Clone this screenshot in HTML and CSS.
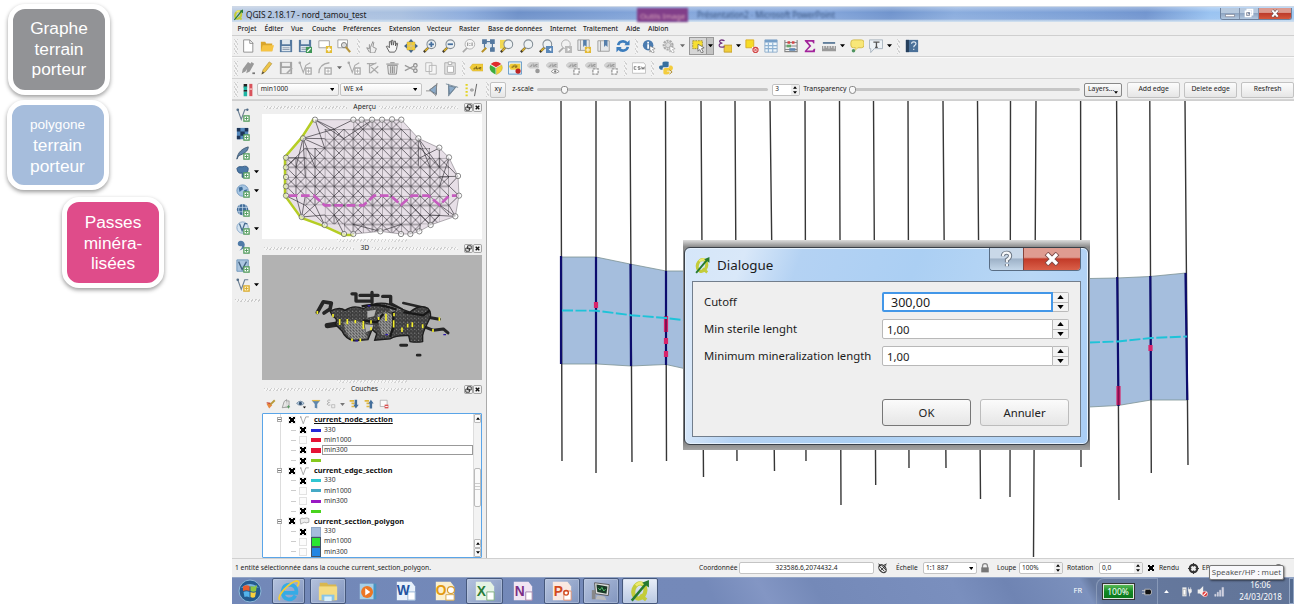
FILE: index.html
```html
<!DOCTYPE html>
<html lang="fr">
<head>
<meta charset="utf-8">
<title>QGIS 2.18.17 - nord_tamou_test</title>
<link rel="stylesheet" href="styles.css">
</head>
<body>
<svg class="sprite" aria-hidden="true">
  <symbol id="new" viewBox="0 0 16 16"><path d="M3 1h7l3.500 3.500V15H3z" fill="#fff" stroke="#888"/><path d="M10 1v4h4" fill="none" stroke="#888"/></symbol>
  <symbol id="open" viewBox="0 0 16 16"><path d="M1 3h5l1 2h7v9H1z" fill="#d9a62c"/><path d="M3 7h13l-2 7H1z" fill="#f6c443"/></symbol>
  <symbol id="save" viewBox="0 0 16 16"><path d="M1 1h14v14H1z" fill="#55799f"/><path d="M3.500 1h9v5h-9zM3 8h10v6H3z" fill="#dfe7ee"/><path d="M4 10h8M4 12h8" stroke="#8898aa"/></symbol>
  <symbol id="saveas" viewBox="0 0 16 16"><use href="#save"/><path d="M9 9h7v7H9z" fill="#3f9656"/><path d="M10.500 14.500l4-4" stroke="#fff" stroke-width="1.500"/></symbol>
  <symbol id="newlay" viewBox="0 0 16 16"><path d="M1 2h12v8H1z" fill="#fff" stroke="#999"/><path d="M9 8h7v8H9z" fill="#e3bd37"/><path d="M12.500 9.500v5M10 12h5" stroke="#fff" stroke-width="1.500"/></symbol>
  <symbol id="laymgr" viewBox="0 0 16 16"><path d="M1 1h11v9H1z" fill="#fff" stroke="#999"/><circle cx="8" cy="7" r="3" fill="#ddd" stroke="#777"/><path d="M10 9l5 6" stroke="#b7963f" stroke-width="2.500"/></symbol>
  <symbol id="touch" viewBox="0 0 16 16"><path d="M5 15l-3-5 3 1V6M6 10l3-7 1 1-1 5 4 2-2 5H6z" fill="#eee" stroke="#888"/></symbol>
  <symbol id="hand" viewBox="0 0 16 16"><path d="M5 15L1.500 8.500 3 8l2 2V3l1.500-.5L7.500 7V1.500H9L9.500 7l1-4.500H12L12 8l1.500-3.500 1 .5-1.500 7-2 3z" fill="#f5f5f5" stroke="#555"/></symbol>
  <symbol id="panmap" viewBox="0 0 16 16"><path d="M8 0l3 3.500H5zM8 16l3-3.500H5zM0 8l3.500-3v6zM16 8l-3.500-3v6z" fill="#42648e"/><path d="M3.500 3.500h4v4h-4zM8.500 8.500h4v4h-4zM8.500 3.500h4v4h-4zM3.500 8.500h4v4h-4z" fill="#f2cd38" stroke="#c3a32b" stroke-width=".5"/></symbol>
  <symbol id="mag" viewBox="0 0 16 16"><path d="M6 10l-5 5" stroke="#3d3727" stroke-width="2.600"/><path d="M6 10l-3.500 3.500" stroke="#dbb22c" stroke-width="2"/><circle cx="9.500" cy="6" r="5" fill="#eef2f4" stroke="#848e96" stroke-width="1.200"/></symbol>
  <symbol id="zin" viewBox="0 0 16 16"><use href="#mag"/><path d="M9.500 3v6M6.500 6h6" stroke="#456f9e" stroke-width="2"/></symbol>
  <symbol id="zout" viewBox="0 0 16 16"><use href="#mag"/><path d="M6.500 6h6" stroke="#456f9e" stroke-width="2"/></symbol>
  <symbol id="z11" viewBox="0 0 16 16"><path d="M6 10l-5 5" stroke="#aaa" stroke-width="2"/><circle cx="9" cy="6" r="5.500" fill="#f6f6f6" stroke="#aaa"/><path d="M6.500 4v4M11.500 4v4M9 4.500v1M9 7v1" stroke="#777"/></symbol>
  <symbol id="zfull" viewBox="0 0 16 16"><path d="M2 1h4v4H2zM11 1h4v4h-4zM11 10h4v4h-4zM5 3h6M13 5v6M4 5v5" fill="#55799f" stroke="#55799f" stroke-width="1.400"/><path d="M6 10l-5 5" stroke="#b59028" stroke-width="2.400"/><circle cx="8.500" cy="7.500" r="3" fill="#dce8f1"/></symbol>
  <symbol id="zsel" viewBox="0 0 16 16"><path d="M0 1h8v10H0z" fill="#f2d952"/><use href="#mag"/></symbol>
  <symbol id="zlast" viewBox="0 0 16 16"><use href="#mag"/><path d="M8 8h8v8H8z" fill="#5c89b9"/><path d="M14 10l-3 2 3 2z" fill="#fff"/></symbol>
  <symbol id="znext" viewBox="0 0 16 16"><circle cx="9" cy="6" r="5" fill="#f2f2f2" stroke="#aaa"/><path d="M6 10l-5 5" stroke="#aaa" stroke-width="2"/><path d="M8 8h8v8H8z" fill="#bbb"/><path d="M11 10l3 2-3 2z" fill="#fff"/></symbol>
  <symbol id="bmnew" viewBox="0 0 16 16"><path d="M1 1h13v12H1z" fill="#e6e8ea" stroke="#999"/><path d="M4 1v12" stroke="#999"/><path d="M7 1h4v8L9 7 7 9z" fill="#557eaa"/><path d="M9 9h7v7H9z" fill="#e3b934"/><path d="M12.500 10v5M10 12.500h5" stroke="#fff"/></symbol>
  <symbol id="bm" viewBox="0 0 16 16"><path d="M1 2h13v12H1z" fill="#e6e8ea" stroke="#999"/><path d="M4 2v12" stroke="#999"/><path d="M8 1h4v8l-2-2-2 2z" fill="#557eaa"/></symbol>
  <symbol id="refresh" viewBox="0 0 16 16"><path d="M2.500 7a5.500 5 0 0 1 10-2M13.500 9a5.500 5 0 0 1-10 2" fill="none" stroke="#3c7dbd" stroke-width="3"/><path d="M15.500 1v6h-6zM.5 15V9h6z" fill="#3c7dbd"/></symbol>
  <symbol id="ident" viewBox="0 0 16 16"><circle cx="7" cy="7" r="6" fill="#4b7cb0"/><path d="M7 6v5M7 3v2" stroke="#fff" stroke-width="2"/><path d="M9 8l6 3-3 1 2 3-2 1-2-3-1 2z" fill="#fff" stroke="#777" stroke-width=".7"/></symbol>
  <symbol id="gear" viewBox="0 0 16 16"><circle cx="7" cy="7" r="5" fill="none" stroke="#aaa" stroke-width="2.500" stroke-dasharray="2.500 1"/><circle cx="7" cy="7" r="3" fill="#ddd" stroke="#aaa"/><path d="M9 8l6 3-3 1 2 3-2 1-2-3-1 2z" fill="#fff" stroke="#999" stroke-width=".7"/></symbol>
  <symbol id="select" viewBox="0 0 16 16"><path d="M2 2h11v9H2z" fill="#f7df33" stroke="#9a8b35" stroke-dasharray="2 1"/><path d="M8 6l7 4-3 1 2 4-2 1-2-4-2 2z" fill="#fff" stroke="#555" stroke-width=".8"/></symbol>
  <symbol id="eps" viewBox="0 0 16 16"><path d="M7 7h9v8H7z" fill="#f0cd3c" stroke="#c19b2c"/><path d="M7.500 2C4.500.5 1.500 1 2 3.200c.5 1.300 1.800 1.500 3 1.500C2.500 5 .8 6 1.500 8c1 2 4.500 1.500 6 .5" fill="none" stroke="#71357e" stroke-width="1.500"/></symbol>
  <symbol id="desel" viewBox="0 0 16 16"><path d="M1 1h9v9H1z" fill="#f6dc28" stroke="#d8ac23"/><path d="M8 9h8v7H8z" fill="#fff"/><circle cx="12" cy="12.500" r="3" fill="#f8dddd" stroke="#cf4444" stroke-width="1.300"/><path d="M10 10.500l4 4m0-4l-4 4" stroke="#cf4444"/></symbol>
  <symbol id="table" viewBox="0 0 16 16"><path d="M1 1h14v14H1z" fill="#eef6fb" stroke="#8aa9c7"/><path d="M1 1h14v3H1z" fill="#769fc8"/><path d="M1 7.500h14M1 11h14M5 4v11M10 4v11" stroke="#8db1d2" stroke-width="1.300"/></symbol>
  <symbol id="abacus" viewBox="0 0 16 16"><path d="M1 1v14M15 1v14M1 14.500h14M1 4h14M1 8h14M1 12h14" stroke="#888" stroke-width="1.300"/><path d="M4 4h3M9 4h3" stroke="#d34545" stroke-width="3"/><path d="M3 8h5" stroke="#65a568" stroke-width="3"/><path d="M6 12h7" stroke="#5f87b2" stroke-width="3"/></symbol>
  <symbol id="sigma" viewBox="0 0 16 16"><path d="M2 1h11v4h-1L10.500 3H5.500l4 5-5 5h6.500l1.500-2H14l-.5 4H2v-1.200L7 8 2 2.200z" fill="#a2249b"/></symbol>
  <symbol id="ruler" viewBox="0 0 16 16"><path d="M1 4.500h14" stroke="#597896" stroke-width="2"/><path d="M0 8h16v6H0z" fill="#9a9a9a"/><path d="M2 8v3M5 8v2M8 8v3M11 8v2M14 8v3" stroke="#eee"/></symbol>
  <symbol id="tip" viewBox="0 0 16 16"><rect x="1" y="1" width="15" height="9" rx="3" fill="#f8e778" stroke="#d1b844"/><path d="M6 9.500V13l4-4" fill="#f8e778" stroke="#d1b844" stroke-width=".5"/><circle cx="4" cy="13.500" r="2" fill="#4e9360"/></symbol>
  <symbol id="note" viewBox="0 0 16 16"><path d="M.5 1h15v10H6l-4 4.500V11H.5z" fill="#edf2f6" stroke="#a2afba"/><path d="M5 3.500h7M8.500 3v6.500M7 9.500h3" stroke="#555" stroke-width="1.500"/></symbol>
  <symbol id="help" viewBox="0 0 16 16"><path d="M1 1h14v14H1z" fill="#4b7199"/><path d="M1 1h3.500v14H1z" fill="#263f5c"/><path d="M7.500 5.500c0-3 5-3 5 0 0 2-2.500 1.500-2.500 4M10 11v1.500" fill="none" stroke="#dfe9f3" stroke-width="1.300"/></symbol>
  <symbol id="pencils" viewBox="0 0 16 16"><path d="M1 14l1-5 6-8 3 2-6 9zM6 14l1-5 5-8 3 2-5 9z" fill="#999"/><path d="M13 14h3" stroke="#777" stroke-width="2"/></symbol>
  <symbol id="pencil" viewBox="0 0 16 16"><path d="M2 15l1.500-5 7-9 3 2-7 9z" fill="#eec548" stroke="#a98a35" stroke-width=".7"/><path d="M2 15l1-3 2 1.500z" fill="#444"/></symbol>
  <symbol id="saveg" viewBox="0 0 16 16"><path d="M1 1h14v14H1z" fill="#a5a5a5"/><path d="M3.500 2h9v4h-9zM3 8h10v6H3z" fill="#eee"/><path d="M9 14l6-6" stroke="#aaa" stroke-width="2"/></symbol>
  <symbol id="vadd" viewBox="0 0 16 16"><path d="M2 2l4 11 3-8 5-3" fill="none" stroke="#aaa" stroke-width="1.200"/><circle cx="2" cy="2" r="1.500" fill="#aaa"/><path d="M9 8h6v7H9z" fill="#fff" stroke="#aaa" stroke-width="1.500"/><path d="M12 9.500v4M10 11.500h4" stroke="#aaa"/></symbol>
  <symbol id="arcadd" viewBox="0 0 16 16"><path d="M1 14C1 7 5 3 13 2" fill="none" stroke="#aaa" stroke-width="1.500"/><path d="M8 8h7v7H8z" fill="#fff" stroke="#aaa" stroke-width="1.500"/><path d="M11.500 9.500v4M9.500 11.500h4" stroke="#aaa"/></symbol>
  <symbol id="node" viewBox="0 0 16 16"><path d="M1 3h10M4 3v11M4 6l8-4M6 7l8 7M5 14l9-8" fill="none" stroke="#aaa" stroke-width="1.400"/></symbol>
  <symbol id="trash" viewBox="0 0 16 16"><path d="M3 5h11l-1 10H4z" fill="#e4e4e4" stroke="#888"/><path d="M1.500 3.500h14M6 2h5M6.500 6v8M8.500 6v8M10.500 6v8" stroke="#888" stroke-width="1.100"/></symbol>
  <symbol id="cut" viewBox="0 0 16 16"><path d="M1 5l10 5M1 11l10-5" stroke="#999" stroke-width="1.500"/><circle cx="13" cy="5" r="2" fill="none" stroke="#888" stroke-width="1.300"/><circle cx="13" cy="11" r="2" fill="none" stroke="#888" stroke-width="1.300"/></symbol>
  <symbol id="copy" viewBox="0 0 16 16"><path d="M2 2h7v10H2zM6 5h8v10H6z" fill="#f6f6f6" stroke="#b3b3b3"/></symbol>
  <symbol id="paste" viewBox="0 0 16 16"><path d="M2 2h12v13H2z" fill="#e4e4e4" stroke="#aaa"/><path d="M6 1h4v3H6zM5 6h7v7H5z" fill="#fff" stroke="#aaa"/></symbol>
  <symbol id="abc" viewBox="0 0 16 16"><path d="M1 7.500l3-4h12v8H4z" fill="#f0cb38" stroke="#d1aa2d" stroke-width=".5"/><path d="M5 9h2V7M8.500 6v3h2V7.500M14 7.500h-2V9h2" fill="none" stroke="#6b5713"/></symbol>
  <symbol id="pie" viewBox="0 0 16 16"><path d="M8 7L2 3.500Q8-2 14 3.500z" fill="#e02b2b"/><path d="M8.500 8l6-3.500q3 7-6 11z" fill="#f2d332" stroke="#bba02b" stroke-width=".5"/><path d="M7.500 8L1.500 4.500q-3 7 6 11z" fill="#3dad3c"/></symbol>
  <symbol id="abcpin" viewBox="0 0 16 16"><path d="M.5 1h15v14H.5z" fill="#e3f0fa" stroke="#5a92c4"/><path d="M1 6l2-3h11v7H3z" fill="#f0cb38"/><path d="M4 7h2V5M8 4v3h2V5" fill="none" stroke="#6b5713"/><circle cx="11.500" cy="11.500" r="3" fill="#bd2424"/></symbol>
  <symbol id="abcg" viewBox="0 0 16 16"><path d="M0 5l3-3h10v6H3z" fill="#d4d4d4" stroke="#c5c5c5"/><path d="M3 6h2V4M7 3v3h2V4M12 4h-2v2h2" fill="none" stroke="#8f8f8f"/></symbol>
  <symbol id="abcg1" viewBox="0 0 16 16"><use href="#abcg"/><circle cx="12" cy="11.500" r="2.600" fill="#999"/></symbol>
  <symbol id="abcg2" viewBox="0 0 16 16"><use href="#abcg"/><path d="M6 12q4-5 9 0-5 4-9 0" fill="#fff" stroke="#888"/><circle cx="10.500" cy="12" r="1.300" fill="#777"/></symbol>
  <symbol id="abcg3" viewBox="0 0 16 16"><use href="#abcg"/><path d="M9 9h6v6H9z" fill="#fff" stroke="#999" stroke-width="1.500" stroke-dasharray="3 1"/></symbol>
  <symbol id="csw" viewBox="0 0 16 16"><path d="M.5 2h13l2 2.500V14H.5z" fill="#fff" stroke="#bbb"/><path d="M5 6.500H2.500v3H5M9.500 6.500H7V8h2.300v1.500H6.800M11 6.500l.6 3 1-2.200 1 2.200.6-3" fill="none" stroke="#666" stroke-width=".9"/></symbol>
  <symbol id="py" viewBox="0 0 16 16"><path d="M4 5V2q0-1.500 4-1.500T11 2v4q0 1-2 1H5Q4 7 4 10H2Q0 9 0 7t2-2h5" fill="#356f9f"/><path d="M12 5h2q2 1 2 3t-2 3H9v1h3v2q-1 1.500-4 1.500T5 14v-4q0-2 2-2h3q2 0 2-3" fill="#f3cc3e"/><path d="M12 10l3 2.500-3 2.500" fill="none" stroke="#a88522"/></symbol>
  <symbol id="bars" viewBox="0 0 16 16"><path d="M3 1h4v4H3zM3 8h4v2H3z" fill="#222"/><path d="M3 4h4v4H3zM3 10h4v5H3z" fill="#1eb5a3"/><path d="M9.500 1h3.500v14H9.500z" fill="#d9535c"/><path d="M9.500 6H13v2H9.500z" fill="#f0b0b0"/></symbol>
  <symbol id="tri1" viewBox="0 0 16 16"><path d="M4 8l8-6v11z" fill="#8cabc9" stroke="#5a7187"/><path d="M0 9h5l6 5M12.500 0L11 15M4 8l9-7" fill="none" stroke="#888"/></symbol>
  <symbol id="tri2" viewBox="0 0 16 16"><path d="M4 3l8 2-7 8z" fill="#8cabc9" stroke="#5a7187"/><path d="M4 1v14M4 15L13 4M1 1l14 4" stroke="#778a9a"/></symbol>
  <symbol id="sec" viewBox="0 0 16 16"><path d="M3 1v14" stroke="#e3d420" stroke-width="2.500" stroke-dasharray="2 2"/><path d="M7 8h4M14.500 1l-2.500 14" stroke="#555"/><circle cx="9" cy="8" r="2" fill="#aaa"/></symbol>
  <symbol id="plus" viewBox="0 0 16 16"><path d="M9 9h6v6H9z" fill="#fff" stroke="#4c9857" stroke-width="1.400"/><path d="M12 10v4M10 12h4" stroke="#4c9857"/></symbol>
  <symbol id="lv" viewBox="0 0 16 16"><path d="M2 2l4 11 4-11h4" fill="none" stroke="#6b7f93" stroke-width="1.300"/><circle cx="2" cy="2" r="1.500" fill="#4f6a85"/><circle cx="13" cy="2" r="1.300" fill="#4f6a85"/><use href="#plus"/></symbol>
  <symbol id="lraster" viewBox="0 0 16 16"><path d="M1 1h13v13H1z" fill="#5589bd"/><path d="M1 1h4v4H1zM10 1h4v4h-4zM5 5h5v5H5zM1 10h4v4H1z" fill="#1d3557"/><use href="#plus"/></symbol>
  <symbol id="lfeather" viewBox="0 0 16 16"><path d="M1 15C2 7 7 3 14 1c0 5-5 8-11 10z" fill="#5f84a8" stroke="#38536e"/><use href="#plus"/></symbol>
  <symbol id="lpg" viewBox="0 0 16 16"><path d="M1 4q1-3 6-2 6-2 7 2c0 4-2 6-4 6l-1 4H7V9Q2 11 1 4" fill="#4b78a6" stroke="#30567e"/><use href="#plus"/></symbol>
  <symbol id="lglobe" viewBox="0 0 16 16"><circle cx="7.500" cy="7.500" r="6.500" fill="#a6c5e2" stroke="#6a94bd"/><path d="M3 4l4-1 1 3-4 3zM9 7l4-1-2 5z" fill="#3f6e9c"/><use href="#plus"/></symbol>
  <symbol id="lgrid" viewBox="0 0 16 16"><circle cx="7.500" cy="7.500" r="6.500" fill="#3f6b98"/><path d="M1 5h13M1 10h13M7.500 1v13M4 2q-2 5 0 11M11 2q2 5 0 11" fill="none" stroke="#cfe0f0" stroke-width=".8"/><use href="#plus"/></symbol>
  <symbol id="lwfs" viewBox="0 0 16 16"><circle cx="7.500" cy="7.500" r="6.500" fill="#d4e3f0" stroke="#81a4c7"/><path d="M4 3l3 8 3-8h3" fill="none" stroke="#456a8e" stroke-width="1.500"/><use href="#plus"/></symbol>
  <symbol id="lcomma" viewBox="0 0 16 16"><path d="M4 1q5-1 6 4 0 5-6 7 3-3 3-5-5 1-5-3 0-2 2-3" fill="#4f7ba8"/><use href="#plus"/></symbol>
  <symbol id="lvirt" viewBox="0 0 16 16"><path d="M1 1h13v13H1z" fill="#aac5df" stroke="#6992ba"/><path d="M3 3l4 9 5-9" fill="none" stroke="#40607f" stroke-width="1.500"/><use href="#plus"/></symbol>
  <symbol id="lvy" viewBox="0 0 16 16"><path d="M2 2l4 11 4-11h4" fill="none" stroke="#6b7f93" stroke-width="1.300"/><circle cx="2" cy="2" r="1.500" fill="#4f6a85"/><path d="M9 9h6v6H9z" fill="#fff4c0" stroke="#d9a92c" stroke-width="1.500"/><path d="M12 10v4M10 12h4" stroke="#d9a92c"/></symbol>
  <symbol id="brush" viewBox="0 0 16 16"><path d="M1 8l4-2 5 4-5 5z" fill="#e7873d"/><path d="M7 9l7-7" stroke="#b89a3b" stroke-width="3"/><path d="M1 6l6 1" stroke="#c7412e" stroke-width="2"/></symbol>
  <symbol id="grp" viewBox="0 0 16 16"><path d="M2 14L5 4l4-3v12z" fill="#e6e6e6" stroke="#777"/><path d="M9 3h4v10H7" fill="#ddd" stroke="#888"/><path d="M12 10v5M9.500 12.500h5" stroke="#559960" stroke-width="1.500"/></symbol>
  <symbol id="eye" viewBox="0 0 16 16"><path d="M1 7q6-7 12 0-6 6-12 0" fill="#bdd2e5" stroke="#46637f"/><circle cx="7" cy="7" r="2.500" fill="#2f4c6d"/><path d="M11 12h5l-2.500 3z" fill="#111"/></symbol>
  <symbol id="funnel" viewBox="0 0 16 16"><path d="M1 2h14l-5 6v7l-4-1V8z" fill="#5f87ae"/><path d="M2 2.500h12" stroke="#e5b945" stroke-width="2"/></symbol>
  <symbol id="epsg" viewBox="0 0 16 16"><path d="M7 2C4 1 2 2 2.500 4q1 1.500 3 1.500Q2 6 2 8.500 3 11 7 9.500" fill="none" stroke="#aaa" stroke-width="1.500"/><path d="M9 9h5v5H9z" fill="#eee" stroke="#aaa"/></symbol>
  <symbol id="expand" viewBox="0 0 16 16"><path d="M1 3h7M4 7h5M4 12h5" stroke="#e0b73e" stroke-width="2.500"/><path d="M9 1h4v8h2.500L11 15 7 9h2z" fill="#446f9c"/></symbol>
  <symbol id="collapse" viewBox="0 0 16 16"><path d="M1 3h7M4 7h5M4 12h5" stroke="#e0b73e" stroke-width="2.500"/><path d="M9 15h4V7h2.500L11 1 7 7h2z" fill="#446f9c"/></symbol>
  <symbol id="rem" viewBox="0 0 16 16"><path d="M2 2h11v10H2z" fill="#fafafa" stroke="#999"/><path d="M9 9h6v6H9z" fill="#da5353"/><path d="M10 12h4" stroke="#fff" stroke-width="1.500"/></symbol>
  <symbol id="qgis" viewBox="0 0 16 16"><ellipse cx="7.500" cy="8" rx="4.300" ry="5.600" transform="rotate(18 7.500 8)" fill="none" stroke="#c3cc3a" stroke-width="3"/><path d="M5 4Q8 1 11 3" fill="none" stroke="#ece96e" stroke-width="2"/><path d="M8 11l4.500 3.500" stroke="#c3cc3a" stroke-width="2.600"/><path d="M2 15L12.500 2.500" stroke="#277a30" stroke-width="1.800"/><path d="M14.500 0v5.500L9.500 2z" fill="#277a30"/></symbol>
  <symbol id="line" viewBox="0 0 16 16"><path d="M2 3l4 11 4-11h5" fill="none" stroke="#999" stroke-width="1.300"/><circle cx="2" cy="3" r="1" fill="#777"/></symbol>
  <symbol id="poly" viewBox="0 0 16 16"><path d="M1 5q3-3 6-1 5-2 8 0v6q-5 2-7 0-3 1-6 3z" fill="#eee" stroke="#888"/></symbol>
  <symbol id="arr" viewBox="0 0 8 5"><path d="M0 0h8L4 5z"/></symbol>
  <symbol id="float" viewBox="0 0 10 10"><rect x=".5" y=".5" width="9" height="9" rx="1.500" fill="#f2f2f2" stroke="#999"/><path d="M4 2h4v3.500H4zM2 4.500h4V8H2z" fill="#fff" stroke="#222"/></symbol>
  <symbol id="close" viewBox="0 0 10 10"><rect x=".5" y=".5" width="9" height="9" rx="1.500" fill="#f2f2f2" stroke="#999"/><path d="M3 3l4 4m0-4L3 7" stroke="#111" stroke-width="1.500"/></symbol>
  <symbol id="lock" viewBox="0 0 16 16"><path d="M4 8V5q0-4 4-4t4 4v3" fill="none" stroke="#888" stroke-width="2"/><path d="M2 7h12v8H2z" fill="#777"/></symbol>
  <symbol id="mouse" viewBox="0 0 16 16"><ellipse cx="8" cy="9" rx="4.500" ry="6.500" transform="rotate(-40 8 9)" fill="#eee" stroke="#333" stroke-width="1.500"/><path d="M3 5l8 8M6 3l7 8M2 2l4 3M5 12L13 4M10 4l4-2" stroke="#222" stroke-width="1.300"/></symbol>
  <symbol id="crs" viewBox="0 0 16 16"><circle cx="8" cy="8" r="5.500" fill="#ddd" stroke="#333" stroke-width="3"/><path d="M8 0v16M0 8h16" stroke="#333" stroke-width="1.500"/><circle cx="8" cy="8" r="3" fill="#eee"/></symbol>
</svg>

<aside class="legend">
  <div class="chip chip-grey">Graphe<br>terrain<br>porteur</div>
  <div class="chip chip-blue"><small>polygone</small><br>terrain<br>porteur</div>
  <div class="chip chip-pink">Passes<br>minéra-<br>lisées</div>
</aside>

<main class="screen">
  <header class="titlebar">
    <svg class="app"><use href="#qgis"/></svg><span class="apptitle">QGIS 2.18.17 - nord_tamou_test</span>
    <span class="ghosttab">Outils Image</span><span class="ghost">Présentation2 - Microsoft PowerPoint</span>
    <div class="winbtns">
      <span class="wb"><svg viewBox="0 0 20 12"><path d="M5 7h10v2.500H5z" fill="#fff" stroke="#667" stroke-width=".6"/></svg></span>
      <span class="wb"><svg viewBox="0 0 20 12"><path d="M8 1.500h6v6H8zM6 3.500h6v6H6z" fill="none" stroke="#fff" stroke-width="1.600"/><path d="M7.500 5h3v3h-3z" fill="none" stroke="#667" stroke-width=".7"/></svg></span>
      <span class="wb wbx"><svg viewBox="0 0 20 12"><path d="M7 2.500l6 7m0-7l-6 7" stroke="#655" stroke-width="3.400"/><path d="M7 2.500l6 7m0-7l-6 7" stroke="#fff" stroke-width="2.200"/></svg></span>
    </div>
  </header>
  <nav class="menu"><span>Projet</span><span>Éditer</span><span>Vue</span><span>Couche</span><span>Préférences</span><span>Extension</span><span>Vecteur</span><span>Raster</span><span>Base de données</span><span>Internet</span><span>Traitement</span><span>Aide</span><span>Albion</span></nav>

  <div class="bar bar1"><i class="grip"></i>
    <svg class="i"><use href="#new"/></svg><svg class="i"><use href="#open"/></svg><svg class="i"><use href="#save"/></svg><svg class="i"><use href="#saveas"/></svg><svg class="i"><use href="#newlay"/></svg><svg class="i"><use href="#laymgr"/></svg><i class="grip g9"></i>
    <svg class="i"><use href="#touch"/></svg><svg class="i"><use href="#hand"/></svg><svg class="i"><use href="#panmap"/></svg><svg class="i"><use href="#zin"/></svg><svg class="i"><use href="#zout"/></svg><svg class="i"><use href="#z11"/></svg><svg class="i"><use href="#zfull"/></svg><svg class="i"><use href="#zsel"/></svg><svg class="i"><use href="#mag"/></svg><svg class="i"><use href="#zlast"/></svg><svg class="i"><use href="#znext"/></svg><svg class="i"><use href="#bmnew"/></svg><svg class="i"><use href="#bm"/></svg><svg class="i"><use href="#refresh"/></svg><i class="grip g7"></i>
    <svg class="i"><use href="#ident"/></svg><svg class="i"><use href="#gear"/></svg><span class="dd dim"><svg><use href="#arr"/></svg></span>
    <span class="active"><span><svg><use href="#select"/></svg></span><b><svg><use href="#arr"/></svg></b></span>
    <svg class="i"><use href="#eps"/></svg><span class="dd"><svg><use href="#arr"/></svg></span>
    <svg class="i"><use href="#desel"/></svg><svg class="i"><use href="#table"/></svg><svg class="i"><use href="#abacus"/></svg><svg class="i"><use href="#sigma"/></svg><svg class="i"><use href="#ruler"/></svg><span class="dd"><svg><use href="#arr"/></svg></span>
    <svg class="i"><use href="#tip"/></svg><svg class="i"><use href="#note"/></svg><span class="dd"><svg><use href="#arr"/></svg></span><i class="grip g8"></i><svg class="i"><use href="#help"/></svg>
  </div>

  <div class="bar bar2"><i class="grip"></i>
    <svg class="i"><use href="#pencils"/></svg><svg class="i"><use href="#pencil"/></svg><svg class="i"><use href="#saveg"/></svg><svg class="i"><use href="#vadd"/></svg><svg class="i"><use href="#arcadd"/></svg><span class="dd ddw dim"><svg><use href="#arr"/></svg></span>
    <svg class="i"><use href="#vadd"/></svg><svg class="i"><use href="#node"/></svg><svg class="i"><use href="#trash"/></svg><svg class="i"><use href="#cut"/></svg><svg class="i"><use href="#copy"/></svg><svg class="i"><use href="#paste"/></svg><i class="grip g7"></i>
    <svg class="i"><use href="#abc"/></svg><svg class="i"><use href="#pie"/></svg><svg class="i"><use href="#abcpin"/></svg><svg class="i"><use href="#abcg1"/></svg><svg class="i"><use href="#abcg2"/></svg><svg class="i"><use href="#abcg3"/></svg><svg class="i"><use href="#abcg3"/></svg><svg class="i"><use href="#abcg3"/></svg><i class="grip g9"></i>
    <svg class="i"><use href="#csw"/></svg><i class="grip g7"></i><svg class="i"><use href="#py"/></svg>
  </div>

  <div class="bar bar3"><i class="grip"></i>
    <svg class="i"><use href="#bars"/></svg>
    <span class="combo">min1000<svg><use href="#arr"/></svg></span><span class="combo">WE x4<svg><use href="#arr"/></svg></span>
    <svg class="i"><use href="#tri1"/></svg><svg class="i"><use href="#tri2"/></svg><svg class="i"><use href="#sec"/></svg><i class="grip g6"></i>
    <span class="btn xy">xy</span><span class="zlabel">z-scale</span><span class="slider s1"><b></b></span>
    <span class="spin sp3"><em>3</em><i><svg class="up"><use href="#arr"/></svg><svg><use href="#arr"/></svg></i></span>
    <span class="tlabel">Transparency</span><span class="slider s2"><b></b></span>
    <span class="btn layers">Layers...<svg><use href="#arr"/></svg></span><span class="btn">Add edge</span><span class="btn">Delete edge</span><span class="btn">Resfresh</span>
  </div>

  <section class="work">
    <div class="rail">
      <div><svg><use href="#lv"/></svg></div><div><svg><use href="#lraster"/></svg></div><div><svg><use href="#lfeather"/></svg></div><div><svg><use href="#lpg"/></svg><svg class="a"><use href="#arr"/></svg></div><div><svg><use href="#lglobe"/></svg><svg class="a"><use href="#arr"/></svg></div><div><svg><use href="#lgrid"/></svg></div><div><svg><use href="#lwfs"/></svg><svg class="a"><use href="#arr"/></svg></div><div><svg><use href="#lcomma"/></svg></div><div><svg><use href="#lvirt"/></svg></div><div><svg><use href="#lvy"/></svg><svg class="a"><use href="#arr"/></svg></div><i></i>
    </div>
    <div class="docks">
      <div class="dockhead"><i></i>Aperçu<i></i><svg><use href="#float"/></svg><svg><use href="#close"/></svg></div>
      <svg class="view" viewBox="96 45 660 375" preserveAspectRatio="none">
        <defs>
          <clipPath id="hull"><path d="M255 62H514L565 118L628 147L657 176L684 232L687 290L676 352L602 378L568 397L541 405L513 405L451 397L370 405H342L284 378L215 354L168 290V176L219 118z"/></clipPath>
          <pattern id="mesh" x="169" y="62" width="57.400" height="57.200" patternUnits="userSpaceOnUse"><path d="M0 0H58M0 28.600H58M0 0V58M28.700 0V58M0 28.600L28.700 0L57.400 28.600L28.700 57.200zM0 0L57.400 57.200M28.700 28.600L57.400 0" fill="none" stroke="#2b282e" stroke-width="1.900"/></pattern>
        </defs>
        <path d="M96 45h660v375H96z" fill="#fff"/>
        <g clip-path="url(#hull)"><path d="M150 50h550v370H150z" fill="#e7dfe7"/><path d="M370 62H514V90H543V119H571V147H600V176H657V348H629V376H571V405H342V376H284V319H226V290H169V176H226V147H284V90H370z" fill="url(#mesh)"/>
        <path d="M255 62L313 90L370 62M255 62L284 147M255 62L341 119L428 62M219 118L313 90M219 118L284 119M219 118L284 147M219 118L255 204M219 118L198 204M219 118L226 233M168 176L226 176M168 204L226 147M565 118L628 204M565 118L600 204M565 118V200M628 147L571 176M628 147V204M657 176L629 261M684 232L629 233M657 204L684 232L657 261M657 261L687 290L657 319M657 319L676 352M676 352L629 318M676 352L600 348M602 378L543 318M602 378L629 348M568 397L571 376M451 397L370 376M451 397L514 376M215 354L284 348M215 354L226 290M215 354L255 318M215 354L198 290M168 290L226 319L284 376M342 405L313 348M284 378L255 318" fill="none" stroke="#2b282e" stroke-width="1.900"/></g>
        <path d="M255 62H514L565 118L628 147L657 176L684 232L687 290L676 352L602 378L568 397L541 405L513 405L451 397L370 405" fill="none" stroke="#69636b" stroke-width="1.500"/>
        <path d="M251 60L215 116L165 174V290L213 356L284 382L340 408H371" fill="none" stroke="#b5cd24" stroke-width="7.500"/>
        <path d="M176 290H252L284 319H400L432 290H482L513 318L545 290H595L629 318L657 290H683" fill="none" stroke="#c65bbf" stroke-width="8" stroke-dasharray="26 11"/>
        <g fill="#fff" fill-opacity=".6" stroke="#555" stroke-width="2"><circle cx="255" cy="62" r="8"/><circle cx="370" cy="62" r="8"/><circle cx="395" cy="62" r="8"/><circle cx="426" cy="62" r="8"/><circle cx="456" cy="62" r="8"/><circle cx="486" cy="61" r="8"/><circle cx="514" cy="62" r="8"/><circle cx="565" cy="118" r="8"/><circle cx="628" cy="146" r="8"/><circle cx="657" cy="175" r="8"/><circle cx="684" cy="231" r="8"/><circle cx="687" cy="290" r="8"/><circle cx="676" cy="352" r="8"/><circle cx="602" cy="378" r="8"/><circle cx="568" cy="397" r="8"/><circle cx="541" cy="405" r="8"/><circle cx="513" cy="405" r="8"/><circle cx="451" cy="397" r="8"/><circle cx="370" cy="405" r="8"/><circle cx="342" cy="405" r="8"/><circle cx="284" cy="378" r="8"/><circle cx="215" cy="354" r="8"/><circle cx="168" cy="290" r="8"/><circle cx="168" cy="262" r="8"/><circle cx="168" cy="234" r="8"/><circle cx="168" cy="205" r="8"/><circle cx="168" cy="176" r="8"/><circle cx="219" cy="118" r="8"/></g>
      </svg>
      <i class="split"></i>
      <div class="dockhead"><i></i>3D<i></i><svg><use href="#float"/></svg><svg><use href="#close"/></svg></div>
      <svg class="view" viewBox="96 43 660 377" preserveAspectRatio="none">
        <defs><pattern id="tin" width="11" height="11" patternUnits="userSpaceOnUse"><path d="M0 0h11v11H0z" fill="#3c3c3c"/><path d="M3 2h3v3H3zM8 7h2v2H8z" fill="#aaa"/></pattern><pattern id="tin2" width="9" height="9" patternUnits="userSpaceOnUse"><path d="M0 0h9v9H0z" fill="#a4a4a4"/><path d="M0 0h9M0 0v9M0 0l9 9" stroke="#222" stroke-width="1.500"/></pattern></defs>
        <path d="M96 43h660v377H96z" fill="#b2b2b2"/>
        <g fill="none" stroke="#262626" stroke-linejoin="round" stroke-linecap="round">
          <path d="M262 216L280 184L304 188L300 206L282 218" stroke-width="11"/>
          <path d="M366 160H378V182H420M390 165H444M426 156V186M458 168H482V190L515 208" stroke-width="10"/>
          <path d="M520 188L556 196L588 204" stroke-width="8"/>
          <path d="M590 230L628 237M580 258L610 270L640 266L654 278" stroke-width="9"/>
          <path d="M292 256L330 250" stroke-width="16"/>
          <path d="M512 315h18M562 345h8" stroke-width="9"/>
        </g>
        <path d="M300 212Q330 198 345 210 370 192 400 205 440 180 480 192 510 205 540 215 570 190 594 204 606 220 600 232L586 262Q580 276 578 285V304Q560 308 540 304L536 286Q500 284 480 296L434 300 440 280 426 268 414 298 372 302Q346 296 336 272L316 252Q326 236 308 228z" fill="url(#tin)" stroke="#1d1d1d" stroke-width="4"/>
        <path d="M340 246Q370 236 400 248L412 294 370 298Q346 290 340 246zM440 224Q470 206 490 228L480 286 455 284zM470 192L514 208 482 214z" fill="url(#tin2)"/>
        <path d="M412 212L438 208 432 228 412 232zM404 252L430 254 426 268 408 276z" fill="#b2b2b2"/>
        <g fill="none" stroke="#181818" stroke-width="7"><path d="M395 198Q440 185 500 208M400 240L440 246 460 220M490 215V262L480 290M520 215L580 225 600 210"/></g>
        <path d="M262 212v9M309 221v10M329 236v18M352 236v16M376 239v10M400 242v24M423 240v10M423 260v10M446 230v9M468 220v22M492 218v10M491 240v22M516 262v13M533 250v12M547 246v14M578 252v12M609 266v9M628 231v11M366 295v8M391 295v10" stroke="#f4ef2d" stroke-width="5"/>
        <path d="M413 196h8M466 283h8M376 302h8M640 283h8" stroke="#2c1aa8" stroke-width="4"/>
      </svg>
      <i class="split"></i>
      <div class="dockhead"><i></i>Couches<i></i><svg><use href="#float"/></svg><svg><use href="#close"/></svg></div>
      <div class="treebar"><svg><use href="#brush"/></svg><svg><use href="#grp"/></svg><svg><use href="#eye"/></svg><svg><use href="#funnel"/></svg><svg><use href="#epsg"/></svg><svg class="a"><use href="#arr"/></svg><svg><use href="#expand"/></svg><svg><use href="#collapse"/></svg><svg><use href="#rem"/></svg></div>
      <div class="tree">
        <ul>
          <li class="lay"><i class="pm"></i><i class="ck on"></i><svg><use href="#line"/></svg><u>current_node_section</u></li>
          <li><i class="ck on"></i><i class="ln c1"></i>330</li>
          <li><i class="ck"></i><i class="ln c2"></i>min1000</li>
          <li><i class="ck on"></i><i class="ln c3"></i><span class="cur">min300</span></li>
          <li class="last"><i class="ck on"></i><i class="ln c4"></i></li>
          <li class="lay"><i class="pm"></i><i class="ck on"></i><svg><use href="#line"/></svg>current_edge_section</li>
          <li><i class="ck on"></i><i class="ln c5"></i>330</li>
          <li><i class="ck"></i><i class="ln c6"></i>min1000</li>
          <li><i class="ck"></i><i class="ln c7"></i>min300</li>
          <li class="last"><i class="ck on"></i><i class="ln c8"></i></li>
          <li class="lay"><i class="pm"></i><i class="ck on"></i><svg><use href="#poly"/></svg>current_section_polygon</li>
          <li><i class="ck on"></i><i class="sq q1"></i>330</li>
          <li><i class="ck"></i><i class="sq q2"></i>min1000</li>
          <li><i class="ck"></i><i class="sq q3"></i>min300</li>
        </ul>
        <div class="vbar"><b><svg class="up"><use href="#arr"/></svg></b><span></span><b class="low"><svg class="up"><use href="#arr"/></svg></b><b><svg><use href="#arr"/></svg></b></div>
      </div>
    </div>
    <div class="canvas">
      <svg viewBox="487 101 806 456">
        <path d="M561 257L596 257L630 264L666 271L700 271L1089 278.500L1117 278L1150 276.500L1186 273L1187 400L1151 400L1118 405.500L1089 407L700 372L666 364.500L631 366L597 364L561 364z" fill="#a5bedd" stroke="#7c9293" stroke-width=".8"/>
        <path d="M561 101L562 461M596 101L596 473M630 101L632 462M665.500 101L666.500 461M701 101L703.500 477M735 101L737 461M770 101L774.500 471M805 101L806 461M839.500 101L841 505M873.500 101L875.700 485M908 101L909 468M943 101L946 468M977.500 101L980.500 499M1010.500 101L1010 497M1036 101L1033.500 557M1080.600 101L1081 467M1116.600 101L1119 500M1149.800 101L1151.300 473M1185 101L1188 465" fill="none" stroke="#363636" stroke-width="1.400"/>
        <path d="M561 256V364M596 257V364M630.500 264L631 366M666 271V365M1117.200 277L1118.500 406M1150.300 276L1151 400M1185.500 273L1187.300 400" fill="none" stroke="#0c0c6d" stroke-width="2.200"/>
        <path d="M596 302v6M666 316v16M666 338v6M666 351v6M1118.500 386v19M1150.500 345v6" stroke="#d9246a" stroke-width="4.200"/>
        <path d="M1118.500 386v19M666 316v16" stroke="#831052" stroke-width="2"/>
        <path d="M562 310.500L596 310.700L631 315.200L666 318L690 321M1089 342.500L1118 341.500L1151 338L1187 336.500" fill="none" stroke="#1ec3d8" stroke-width="1.900" stroke-dasharray="11 2.500"/>
      </svg>
    </div>
  </section>

  <footer class="status">
    <span class="msg">1 entité sélectionnée dans la couche current_section_polygon.</span>
    <span class="lb co">Coordonnée</span><span class="fld f1">323586.6,2074432.4</span><svg class="ms"><use href="#mouse"/></svg>
    <span class="lb ec">Échelle</span><span class="fld f2">1:1 887<svg><use href="#arr"/></svg></span><svg class="lk"><use href="#lock"/></svg>
    <span class="lb lo">Loupe</span><span class="spin"><em>100%</em><i><svg class="up"><use href="#arr"/></svg><svg><use href="#arr"/></svg></i></span>
    <span class="lb ro">Rotation</span><span class="spin"><em>0,0</em><i><svg class="up"><use href="#arr"/></svg><svg><use href="#arr"/></svg></i></span>
    <i class="ck on"></i><span class="lb re">Rendu</span><svg class="cr"><use href="#crs"/></svg><span class="lb">EP</span>
  </footer>

  <footer class="task">
    <span class="t t0"><svg viewBox="0 0 24 24"><circle cx="12" cy="12" r="11" fill="#245a8e" stroke="#8db7d7"/><path d="M3 9q9-8 18 0-9-3-18 0" fill="#78b4df"/><path d="M5 7.500q3.500-2 6.500-.5V12q-3-1.500-6.500 0z" fill="#ea5a2b"/><path d="M12.500 7q3 1.500 6.500-1l-1 6q-2.500 1.500-5.500 0z" fill="#8cc63e"/><path d="M5.500 13q3-1.500 6 0v5.500q-2.500-1.500-5-.5z" fill="#53b3ea"/><path d="M12.500 13q3 1.500 5.500 0l-1 5q-2 1.500-4.500 0z" fill="#fad13c"/></svg></span>
    <span class="t box t1"><svg viewBox="0 0 24 24"><path d="M19 17q-3 5-8 4-6-1-6-9 1-7 8-7 8 1 7 9H6" fill="none" stroke="#35abe5" stroke-width="4"/><path d="M2 22Q-1 19 7 10 15 2 20 1q5 0 1 6" fill="none" stroke="#f2cb37" stroke-width="2"/></svg></span>
    <span class="t box t2"><svg viewBox="0 0 24 24"><path d="M3 3h8l1 2h9v17H3z" fill="#d9b74f"/><path d="M2 7h20v15H2z" fill="#f5dc83"/><path d="M5 16h14v6H5z" fill="#88c5e8"/><path d="M8 18h8v5H8z" fill="#d9f0fa"/></svg></span>
    <span class="t t3"><svg viewBox="0 0 24 24"><path d="M5 4h16v17H5z" fill="#4793c3"/><path d="M3 4h15v17H3z" fill="#a7cfe6"/><circle cx="11" cy="13" r="6.500" fill="#ed7724"/><path d="M9 9l5.500 4L9 17z" fill="#fff"/></svg></span>
    <span class="t t4"><svg viewBox="0 0 24 24"><path d="M2 2h16l4 5v15H2z" fill="#e8f1fb"/><path d="M14 13h8v9h-8z" fill="#fff" stroke="#91b0d3"/><text x="2" y="16" class="off" fill="#2354a0">W</text></svg></span>
    <span class="t t5"><svg viewBox="0 0 24 24"><path d="M2 2h16l4 5v15H2z" fill="#fbf0cf"/><text x="2" y="16" class="off" fill="#e39b12">O</text><circle cx="18.500" cy="11" r="3.800" fill="#fff" stroke="#d79a2a" stroke-width="1.200"/><path d="M13 16h9v6h-9z" fill="#fff" stroke="#d8a544"/></svg></span>
    <span class="t box t6"><svg viewBox="0 0 24 24"><path d="M2 2h16l4 5v15H2z" fill="#e5f3e4"/><path d="M14 13h8v9h-8z" fill="#fff" stroke="#77aa79"/><text x="3" y="17" class="off" fill="#287c38">X</text></svg></span>
    <span class="t t7"><svg viewBox="0 0 24 24"><path d="M2 2h16l4 5v15H2z" fill="#f1e5f3"/><path d="M15 13h7v9h-7z" fill="#fff" stroke="#a182ac"/><text x="3" y="17" class="off" fill="#7b2f86">N</text></svg></span>
    <span class="t box t8"><svg viewBox="0 0 24 24"><path d="M2 2h16l4 5v15H2z" fill="#fae9e2"/><path d="M14 12h8v10h-8z" fill="#fff" stroke="#dd8b6c"/><text x="3" y="17" class="off" fill="#d24a1f">P</text><circle cx="16.500" cy="14" r="2.500" fill="none" stroke="#d24a1f" stroke-width="1.500"/></svg></span>
    <span class="t box t9"><svg viewBox="0 0 24 24"><path d="M5 3l16 2-1 12-14-2z" fill="#ddd" stroke="#555"/><path d="M7 5l12 2-1 8-10-2z" fill="#183a25"/><path d="M9 9l2 2 2-3 2 4 2-2" fill="none" stroke="#56c76d"/><path d="M8 17l8 1 2 4-12-1z" fill="#bbb"/><path d="M2 11h4v10H2z" fill="#888"/></svg></span>
    <span class="t box t10"><svg viewBox="0 0 16 16"><use href="#qgis"/></svg></span>
    <div class="tray">
      <span class="fr">FR</span>
      <div class="bat"><b>100%</b><svg class="plug" viewBox="0 0 16 10"><path d="M4 1h7q3 0 3 4t-3 4H4zM0 3h5M0 7h5" fill="#111" stroke="#ddd"/></svg></div>
      <svg class="tu up" viewBox="0 0 8 5"><use href="#arr" fill="#fff"/></svg>
      <svg class="ti" viewBox="0 0 16 16"><path d="M2 2h6v13H2z" fill="#eee"/><path d="M3 5h4v8H3z" fill="#fff" stroke="#aaa"/><path d="M10 5h5v4q-2 2-2.500 1V15M11 5V2M14 5V2" fill="#eee" stroke="#eee"/></svg>
      <svg class="ti" viewBox="0 0 16 16"><path d="M1 5h3l5-5v15L4 11H1z" fill="#eee"/><circle cx="11.500" cy="11.500" r="4" fill="#dd3737" stroke="#fff" stroke-width=".8"/><path d="M9 14l5-5" stroke="#fff" stroke-width="1.500"/></svg>
      <svg class="ti" viewBox="0 0 16 16"><path d="M1 15v-3h2v3zM4.500 15v-6h2v6zM8 15V6h2v9zM11.500 15V2h2.500v13z" fill="#ccd" stroke="#fff" stroke-width=".4"/></svg>
      <div class="clock">16:06<br>24/03/2018</div>
      <i class="desk"></i>
    </div>
  </footer>
  <i class="crshint"></i>
  <div class="tooltip">Speaker/HP : muet</div>

  <div class="shade">
    <div class="dialog">
      <div class="dtitle"><svg><use href="#qgis"/></svg><span>Dialogue</span>
        <div class="dbtns"><b><svg viewBox="0 0 16 20"><path d="M4 7q0-4 4-4t4 3.500Q12 9 8.500 11v2.500M8.500 15.500V18" fill="none" stroke="#6b7582" stroke-width="4.600"/><path d="M4 7q0-4 4-4t4 3.500Q12 9 8.500 11v2.500M8.500 15.500V18" fill="none" stroke="#f4f6f8" stroke-width="2.400"/></svg></b><b class="dx"><svg viewBox="0 0 16 14"><path d="M2.500 1.500l11 11m0-11l-11 11" stroke="#7b4a48" stroke-width="5.200"/><path d="M3 2l10 10m0-10L3 12" stroke="#fff" stroke-width="3.300"/></svg></b></div>
      </div>
      <div class="dbody">
        <label>Cutoff</label><div class="num focus"><em>300,00</em><i><b><svg class="up"><use href="#arr"/></svg></b><b><svg><use href="#arr"/></svg></b></i></div>
        <label>Min sterile lenght</label><div class="num"><em>1,00</em><i><b><svg class="up"><use href="#arr"/></svg></b><b><svg><use href="#arr"/></svg></b></i></div>
        <label>Minimum mineralization length</label><div class="num"><em>1,00</em><i><b><svg class="up"><use href="#arr"/></svg></b><b><svg><use href="#arr"/></svg></b></i></div>
        <div class="acts"><button class="def">OK</button><button>Annuler</button></div>
      </div>
    </div>
  </div>
</main>
</body>
</html>
```
FILE: styles.css
```css
*{box-sizing:border-box}
body{margin:0;width:1294px;height:613px;overflow:hidden;background:#fff;display:flex;font:7px/1 "Noto Sans","Open Sans",sans-serif;color:#1c1c1c}
svg{display:block;flex:none}
i,em{font-style:normal}
.sprite{position:absolute;width:0;height:0}
.up{transform:rotate(180deg)}

/* slide legend */
.legend{width:232px;flex:none;display:flex;flex-direction:column;padding:4px 0 0 7px}
.chip{width:102px;height:91px;border:5px solid #fff;border-radius:17px;box-shadow:0 2px 4px #0006;color:#fff;font:17.300px/20.700px "Liberation Sans",Arial,sans-serif;text-align:center;padding-top:9px}
.chip small{font-size:13.600px}
.chip-grey{background:#929396;margin-left:1px}
.chip-blue{background:#a6bddc;margin-top:5px;height:90px;padding:8px 1px 0 0;line-height:20.400px}
.chip-pink{background:#df4c8a;margin:7px 0 0 55px;padding-top:10px}

/* application window */
.screen{position:relative;width:1062px;height:598px;margin-top:6px;flex:none;display:flex;flex-direction:column;background:#efefef}
.titlebar{height:16px;flex:none;display:flex;align-items:center;background:linear-gradient(#fff5,transparent 35%,#fff1 80%,#cde 94%),linear-gradient(100deg,#b4c6e0 0,#a9c0e0 16%,#8eaddd 22%,#6e91c9 27%,#86a8dc 40%,#84a6db 56%,#7094cd 62%,#8badde 68%,#7b9fd6 80%,#7195cf 86%,#9ac3f1 92%,#a3caf3 100%);padding-left:1px;border-top:1px solid #cfd9e6}
.app{width:11px;height:12px}
.apptitle{font-size:8.300px;margin-left:2px;padding-top:1px;width:391px;white-space:nowrap;letter-spacing:-.1px}
.ghosttab{width:51px;height:14px;background:#813e89;color:#dab;text-align:center;line-height:17px;font-size:7.500px;filter:blur(.9px);white-space:nowrap}
.ghost{margin-left:9px;padding-top:1px;font-size:8px;color:#203963;filter:blur(1.1px);opacity:.75;width:145px;white-space:nowrap;letter-spacing:-.06px}
.winbtns{margin:0 2px 2px auto;display:flex;border:1px solid #6d819d;border-top:0;border-radius:0 0 3px 3px;height:12px;overflow:hidden}
.wb{width:19px;display:flex;justify-content:center;background:linear-gradient(#b7c9de 45%,#8fa6c3 50%,#b2c7df);border-right:1px solid #8192ac}
.wb svg{width:18px;height:11px}
.wbx{width:32px;border:0;background:linear-gradient(#dc9a8f 40%,#bd3c2c 50%,#d3573c)}
.menu{height:14px;flex:none;display:flex;align-items:center;padding:2px 0 0 5.500px;border-bottom:1px solid #cfcfcf;font-size:6.700px;font-weight:500;white-space:nowrap}
.menu span:nth-child(1){width:27px}.menu span:nth-child(2){width:26.500px}.menu span:nth-child(3){width:21px}.menu span:nth-child(4){width:31px}.menu span:nth-child(5){width:46px}.menu span:nth-child(6){width:38px}.menu span:nth-child(7){width:32px}.menu span:nth-child(8){width:29px}.menu span:nth-child(9){width:62px}.menu span:nth-child(10){width:33px}.menu span:nth-child(11){width:43px}.menu span:nth-child(12){width:22px}

.bar{display:flex;align-items:center;flex:none;padding-left:2px;border-bottom:1px solid #d4d4d4;background:#f0f0f0}
.bar1{height:21px}.bar2{height:22px;border-top:1px solid #fafafa}.bar3{height:21px;padding-top:1px}
.i{width:14px;height:14px;margin:0 2.650px}
.grip{width:4px;height:15px;flex:none;background:repeating-linear-gradient(60deg,#d2d2d2 0 1px,#f4f4f4 1px 2.500px)}
.g6,.g7,.g8,.g9{width:3px;margin:0 2px}
.g6{margin-left:5px;margin-right:1px}.g8{margin:0 2px 0 4px}.g9{margin:0 3px}
.dd{width:8px;display:flex;justify-content:center;flex:none}
.dd svg{width:5px;height:3.500px}
.ddw{width:9.500px}
.dim{opacity:.55}
.active{display:flex;width:25px;height:18px;margin:0 1px 0 3px;border:1px solid #999;background:#d6d6d6;flex:none}
.active span{width:17px;display:flex;align-items:center;justify-content:center}
.active span svg{width:14px;height:14px}
.active b{width:7px;border-left:1px solid #999;display:flex;align-items:center;justify-content:center;background:#c4c4c4}
.active b svg{width:5px;height:3.500px}
.combo{width:82px;height:13px;margin-right:1px;padding:0 4px 0 2.500px;border:1px solid #c4c4c4;border-radius:2px;background:linear-gradient(#fff,#ececec);display:flex;align-items:center;justify-content:space-between;flex:none;font-size:6.700px}
.combo svg{width:4.500px;height:3px}
.btn{width:53px;height:16px;margin-right:4px;border:1px solid #c2c2c2;border-radius:2px;background:linear-gradient(#fcfcfc,#e6e6e6);display:flex;align-items:center;justify-content:center;flex:none;font-size:6.800px;white-space:nowrap}
.xy{width:16px;margin:0}
.zlabel{width:31px;padding-left:6px;flex:none;font-size:6.900px}
.slider{height:3px;border-radius:2px;background:#c6c6c6;position:relative;flex:none}
.slider b{position:absolute;top:-2.500px;width:7px;height:8px;border:1px solid #888;background:#f8f8f8;border-radius:3px 3px 4px 4px}
.s1{width:231px;margin-right:4px}.s1 b{left:24px}
.s2{width:231px;margin-right:4px}.s2 b{left:0}
.layers{width:38px;height:14px;border-color:#888;margin-right:5px}
.layers svg{width:4px;height:3px;margin-top:5px}
.spin{display:flex;height:12px;width:44px;border:1px solid #c2c2c2;border-radius:2px;background:#fff;flex:none;font-size:6.500px}
.spin em{flex:1;padding-left:2px;align-self:center}
.spin i{width:8px;display:flex;flex-direction:column;align-items:center;justify-content:space-around;background:#efefef}
.spin svg{width:4px;height:3px}
.sp3{width:28px}
.tlabel{width:49px;padding-left:3px;flex:none;font-size:6.900px}

.work{display:flex;height:458px;flex:none;border-top:1px solid #d0d0d0}
.rail{width:30px;flex:none;padding:5px 0 0 4px}
.rail div{height:18.850px;display:flex;align-items:center}
.rail svg{width:14px;height:14px}
.rail .a{width:5px;height:3.500px;margin-left:4px}
.rail i{display:block;height:3px;margin:5px 2px 0 -1px;background:repeating-linear-gradient(120deg,#ccc 0 1px,#f4f4f4 1px 3px)}
.docks{width:220px;flex:none;display:flex;flex-direction:column}
.dockhead{height:13px;flex:none;display:flex;align-items:center;gap:2px;font-size:6.800px}
.dockhead i{flex:1;height:3px;margin:0 4px 0 1px;background:repeating-linear-gradient(120deg,#d0d0d0 0 1px,#f5f5f5 1px 3px)}
.dockhead i:first-child{margin-left:2px;flex:1.060}
.dockhead svg{width:9px;height:9px;margin-right:-1.500px}
.dockhead svg:last-child{margin-right:0}
.view{width:220px;height:125px}
.split{height:3px;width:70px;flex:none;margin:0 auto;background:repeating-linear-gradient(120deg,#d6d6d6 0 1px,#f5f5f5 1px 3px)}
.treebar{height:16px;flex:none;display:flex;align-items:center;padding-left:4px;gap:5px}
.treebar svg{width:10px;height:10px}
.treebar .a{width:5px;height:3px;margin:0 -1px;opacity:.5}
.tree{flex:1;display:flex;border:1.500px solid #5aa5e8;border-radius:1px;background:#fff;overflow:hidden;margin-top:1px}
.tree ul{flex:1;margin:0;padding:.8px 0 0 7px;list-style:none;background:linear-gradient(#ddd,#ddd) 17px 0/1px 100% no-repeat}
.tree li{height:10.170px;display:flex;align-items:center;padding-left:21px;font-size:6.700px;white-space:nowrap;color:#333}
.tree .lay{padding-left:7px;font-size:7.350px;letter-spacing:.02px;font-weight:700;color:#111}
.lay svg{width:11px;height:10px;margin:0 4px 0 3px}
.pm{width:5px;height:5px;border:1px solid #aaa;background:linear-gradient(#777,#777) center/3px 1px no-repeat #fff;margin-right:6px}
.tree li:not(.lay)::before{content:"";width:5px;height:1px;background:#ccc;margin:0 3px 0 0}
.ck{width:8px;height:8px;flex:none;border:1px solid #e2e2e2;background:#fcfcfc}
.on{border-color:#eee;background:linear-gradient(45deg,transparent 40%,#000 40% 60%,transparent 60%),linear-gradient(-45deg,#f6f6f6 40%,#000 40% 60%,#f6f6f6 60%)}
.ln{width:10px;height:3px;margin:0 3px 0 4px;flex:none}
.sq{width:10px;height:10.200px;margin:0 3px 0 4px;border:1px solid #456;flex:none}
.c1{background:#2529d8}.c2{background:#e51335;height:4px}.c3{background:#e51335;height:5px}.c4{background:#86c91d}.c5{background:#30c6d2}.c6{background:#46a9c5}.c7{background:#9917c4}.c8{background:#49d41e}
.q1{background:#a6bddc;border-color:#90a8c6}.q2{background:#2be532}.q3{background:#2386e2}
.cur{width:151px;height:10px;line-height:8px;border:1px solid #999;padding-left:1px;margin-left:-2px}
.vbar{width:10px;background:#f3f3f3;display:flex;flex-direction:column;border-left:1px solid #ddd}
.vbar b{height:9px;border:1px solid #bbb;border-radius:1px;display:flex;align-items:center;justify-content:center;background:#fafafa}
.vbar b svg{width:4px;height:3px}
.vbar span{height:39px;margin-top:45px;border:1px solid #bbb;border-radius:2px;background:repeating-linear-gradient(#ccc 0 1px,#fafafa 1px 3px) center/5px 9px no-repeat #fafafa}
.vbar .low{margin-top:auto}
.canvas{flex:1;margin-left:4px;border-left:1px solid #aaa;background:#fff}
.canvas svg{width:806px;height:456px}

.status{height:13px;flex:1;display:flex;align-items:center;background:#f0f0f0;border-top:1px solid #d0d0d0;padding-left:3px;font-size:6.600px;white-space:nowrap}
.msg{width:464px;flex:none;font-size:6.750px}
.lb{flex:none}
.co{width:40px}.ec{width:27px;margin-left:8px}.lo{width:22px;margin-left:7px}.ro{width:32px;margin-left:4px}.re{width:29px;margin-left:4px}
.fld{height:12px;border:1px solid #c4c4c4;border-radius:2px;background:#fff;flex:none;display:flex;align-items:center;justify-content:center}
.f1{width:135px}.f2{width:54px;justify-content:space-between;padding:0 3px 0 2px}
.f2 svg{width:4.500px;height:3px}
.ms{width:11px;height:12px;margin-left:3px}.lk{width:10px;height:12px;margin-left:3px}.cr{width:11px;height:11px;margin-right:3px}
.status .ck{margin-left:4px}

.task{height:27px;flex:none;display:flex;align-items:center;border-top:1px solid #93a5c6;background:linear-gradient(60deg,#7288b8 0,#7489b9 45%,#8396c4 50%,#7489b8 55%,#7a8fbe 68%,#6f84b3 73%,#7c91bd 80%,#66799f 81%,#617497 100%)}
.t{width:36px;height:26px;display:flex;align-items:center;justify-content:center;flex:none}
.t svg{width:22px;height:22px}
.t0 svg{width:24px;height:24px}
.box{border:1px solid #46587c;border-radius:2px;background:linear-gradient(135deg,#d5dff0aa,#8ea0c488);box-shadow:inset 0 0 0 1px #c8d4e866}
.off{font:bold 15px "Liberation Sans",sans-serif}
.t1{width:33px;margin-left:4px}.t2{margin-left:5px}.t3{margin-left:3px;width:38px}.t4{width:38px}.t5{width:40px}.t6{width:37px;margin-left:1px}.t7{width:40px}.t8{margin-left:1px}.t9{margin-left:3px}.t10{margin-left:3px;background:linear-gradient(#e8eef8,#b9c8e2)}
.tray{margin-left:auto;display:flex;align-items:center;height:26px;color:#fff;padding-left:0}
.fr{font-size:7.500px;width:22px}
.bat{width:62px;height:26px;border:1px solid #8899b8;border-top-left-radius:8px;border-bottom:0;display:flex;align-items:center;padding-left:6px;gap:8px}
.bat b{width:31px;height:15px;background:linear-gradient(#5ab956,#128a24 50%,#0d771c);border:1px solid #dfe8df;outline:1px solid #333;font:8.500px/13px "Noto Sans",sans-serif;text-align:center}
.plug{width:11px;height:8px}
.tu{width:5px;height:3px;margin:0 12px 0 6px}
.ti{width:11px;height:11px;margin-right:5.500px}
.clock{width:58px;text-align:center;font-size:8px;line-height:12px;color:#fff;padding-left:3px}
.desk{width:5px;height:26px;border:1px solid #91a4c3;background:#536a8f;margin-left:1px}
.crshint{position:absolute;left:1042px;top:558px;width:9px;height:9px;border:1px solid #555;border-radius:50%}
.tooltip{position:absolute;left:977px;top:559px;width:75px;height:15px;background:#f8f8fb;border:1px solid #777;border-radius:2px;box-shadow:1px 1px 2px #0007;color:#555;font-size:7.900px;line-height:12px;text-align:center;white-space:nowrap}

/* dialog */
.shade{position:absolute;left:451px;top:234px;width:407px;height:210px;padding:7px 1px 5px 1px;background:linear-gradient(#ddd,#8a8a8a 7px,#777 200px,#a5a5a5)}
.dialog{height:198px;border:1px solid #3a4048;border-radius:6px;background:linear-gradient(110deg,#d5e6f9 0,#d9e8f9 13%,#b4d2f3 25%,#abcff3 50%,#b9d7f5 75%,#a9cdf5);padding:0 7px 7px;box-shadow:inset 0 0 0 1px #e5f1fd}
.dtitle{height:33px;display:flex;align-items:center;font-size:13.400px;padding:0 0 0 2px}
.dtitle>svg{width:17px;height:19px;margin:1px 6px 0 0}
.dtitle>span{padding-top:2px}
.dbtns{display:flex;margin:0 0 0 auto;align-self:flex-start;height:23px;width:92px;border:1px solid #596d84;border-top:0;border-radius:0 0 4px 4px;overflow:hidden}
.dbtns b{width:33px;display:flex;align-items:center;justify-content:center;background:linear-gradient(#c9d8e8 45%,#9db1c7 50%,#c4d7e9)}
.dbtns b svg{width:15px;height:18px}
.dbtns .dx{flex:1;border-left:1px solid #87443c;background:linear-gradient(#df9c91 42%,#c23a28 50%,#da6049)}
.dbtns .dx svg{width:16px;height:14px}
.dbody{height:156px;border:1px solid #727e8c;background:#efefef;padding:10px 11px 0 11px;display:grid;grid-template-columns:178px 1fr;grid-auto-rows:20px;row-gap:7px;align-items:center;font-size:11.300px}
.dbody label{white-space:nowrap}
.num{height:20px;display:flex}
.num em{flex:1;height:20px;border:1px solid #b8b8b8;border-radius:2px 0 0 2px;background:#fff;padding-left:4px;line-height:19px}
.num i{width:16px;display:flex;flex-direction:column;border:1px solid #bbb;border-left:0;border-radius:0 2px 2px 0}
.num b{flex:1;display:flex;align-items:center;justify-content:center;background:#f3f3f3}
.num b+b{border-top:1px solid #bbb}
.num svg{width:7px;height:4px}
.focus em{border:2px solid #4397e8;font:12.500px/18px "Noto Sans",sans-serif;padding-left:7px}
.acts{grid-column:2;align-self:start;display:flex;justify-content:space-between;margin-top:26px;height:27px}
.acts button{width:89px;height:27px;border:1px solid #bcbcbc;border-radius:3px;background:linear-gradient(#fbfbfb,#e6e6e6);font:11.300px "Noto Sans",sans-serif;color:#222;padding:0}
.acts .def{border-color:#777}
```
